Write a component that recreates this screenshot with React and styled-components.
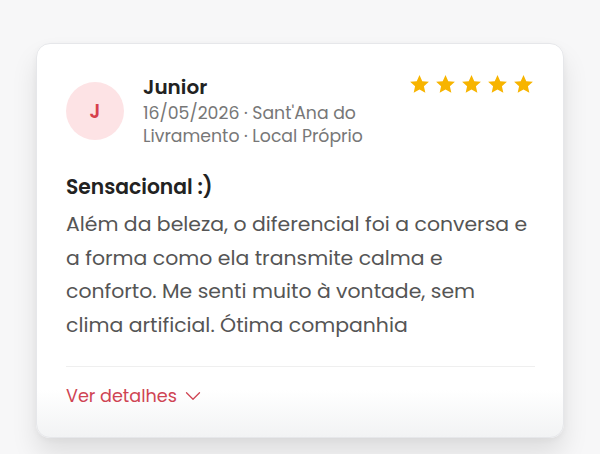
import React from 'react';
import styled, { createGlobalStyle } from 'styled-components';
import { ChevronDown } from 'lucide-react';

const GlobalStyle = createGlobalStyle`
  html, body {
    margin: 0;
    padding: 0;
    background: #f7f7f8;
    font-family: "Poppins", "Noto Sans", "Open Sans", sans-serif;
  }
`;

const Page = styled.div`
  width: 600px;
  height: 454px;
  box-sizing: border-box;
  padding: 43px 36px 0 36px;
  overflow: hidden;
`;

const Card = styled.div`
  background: linear-gradient(to bottom, #ffffff 0%, #ffffff 88%, #f2f3f4 100%);
  border: 1px solid #e6e7ea;
  border-radius: 14px;
  box-shadow: 0 16px 26px rgba(0, 0, 0, 0.1), 0 2px 6px rgba(0, 0, 0, 0.04);
  padding: 36px 28px 30px 29px;
  height: 395px;
  box-sizing: border-box;
`;

const Top = styled.div`
  display: flex;
  align-items: flex-start;
`;

const Avatar = styled.div`
  width: 58px;
  height: 58px;
  border-radius: 50%;
  background: #fde3e5;
  color: #d6404c;
  font-weight: 600;
  font-size: 19px;
  display: flex;
  align-items: center;
  justify-content: center;
  flex-shrink: 0;
  margin-right: 19px;
  margin-top: 2px;
`;

const Info = styled.div`
  flex: 1;
  margin-top: -5px;
`;

const Name = styled.div`
  font-size: 20px;
  font-weight: 600;
  color: #222;
  line-height: 24px;
  margin-bottom: 3px;
`;

const Meta = styled.div`
  font-size: 17.3px;
  color: #777;
  line-height: 22.5px;
  width: 240px;
`;

const Stars = styled.div`
  display: flex;
  gap: 3px;
  margin-top: -7px;
`;

const Star = () => (
  <svg width="23" height="23" viewBox="0 0 24 24">
    <path
      fill="#f7b400"
      d="M12 2.2l2.9 6.3 6.9.7-5.2 4.6 1.5 6.8L12 17.1l-6.1 3.5 1.5-6.8-5.2-4.6 6.9-.7z"
    />
  </svg>
);

const Title = styled.div`
  margin-top: 25px;
  font-size: 20.3px;
  font-weight: 600;
  color: #222;
`;

const Body = styled.p`
  margin: 6px 0 0 0;
  font-size: 20.4px;
  line-height: 33.7px;
  color: #555;
`;

const Divider = styled.div`
  height: 1px;
  background: #efefef;
  margin-top: 23px;
`;

const Details = styled.button`
  display: flex;
  align-items: center;
  gap: 3px;
  border: none;
  background: none;
  padding: 0;
  margin-top: 16px;
  font-family: inherit;
  font-size: 17.6px;
  color: #cf4453;
  cursor: pointer;
`;

export default function App() {
  return (
    <>
      <GlobalStyle />
      <Page>
        <Card>
          <Top>
            <Avatar>J</Avatar>
            <Info>
              <Name>Junior</Name>
              <Meta>16/05/2026 · Sant'Ana do Livramento · Local Próprio</Meta>
            </Info>
            <Stars>
              {[0, 1, 2, 3, 4].map((i) => (
                <Star key={i} />
              ))}
            </Stars>
          </Top>
          <Title>Sensacional :)</Title>
          <Body>
            Além da beleza, o diferencial foi a conversa e a forma como ela transmite calma e
            conforto. Me senti muito à vontade, sem clima artificial. Ótima companhia
          </Body>
          <Divider />
          <Details>
            Ver detalhes
            <ChevronDown size={26} strokeWidth={1.2} />
          </Details>
        </Card>
      </Page>
    </>
  );
}
